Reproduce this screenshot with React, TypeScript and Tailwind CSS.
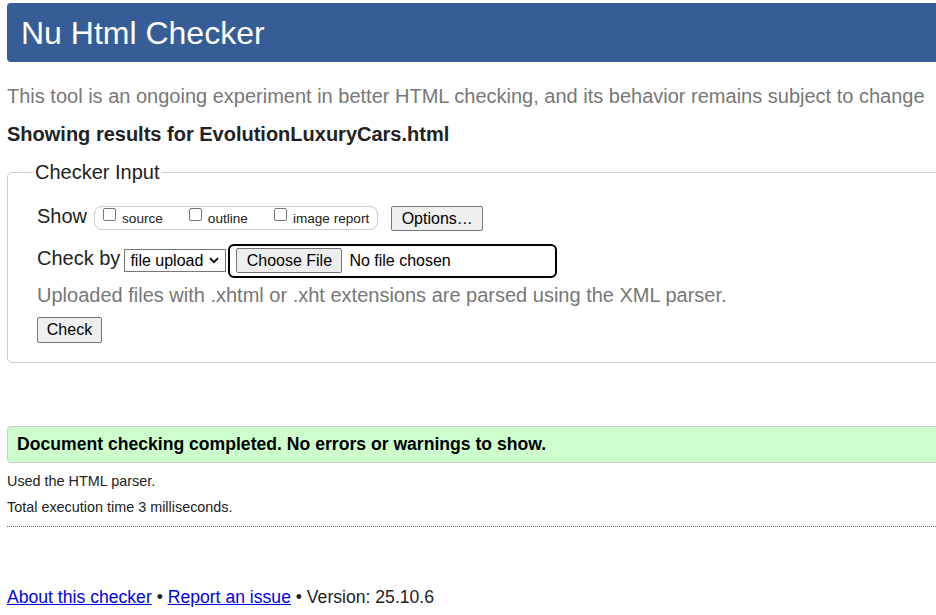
import React from "react";

function Checkbox() {
  return (
    <span className="block w-[13px] h-[13px] shrink-0 bg-white border border-[#767676] rounded-[2px]" />
  );
}

function Opt({ label, first }: { label: string; first?: boolean }) {
  return (
    <label className={`flex items-start ${first ? "" : "ml-[26px]"}`}>
      <Checkbox />
      <span className="ml-[6px] mt-[3px] text-[13.6px] leading-[16px] text-[#222]">{label}</span>
    </label>
  );
}

export default function App() {
  return (
    <div
      className="w-[936px] h-[615px] overflow-hidden bg-white text-[#222]"
      style={{ fontFamily: '"Liberation Sans", Arial, sans-serif' }}
    >
      <div className="w-[1010px] pl-[7px] pt-[3px]">
        <h1 className="h-[59px] bg-[#365d95] rounded-[4px] px-[14px] flex items-center text-white text-[32px] leading-none font-normal">
          Nu Html Checker
        </h1>

        <p className="mt-[23px] text-[20px] leading-[23px] text-[#777]">
          This tool is an ongoing experiment in better HTML checking, and its behavior remains subject to change
        </p>

        <p className="mt-[15px] text-[20px] leading-[23px] font-bold text-[#222]">
          Showing results for EvolutionLuxuryCars.html
        </p>

        <fieldset className="mt-[15px] border border-[#cccccc] rounded-[5px] pl-[29px] pr-[29px] pt-[21px] pb-[19px]">
          <legend className="-ml-[4px] px-[2px] text-[20px] leading-[23px] text-[#222]">Checker Input</legend>

          <div className="flex items-start">
            <span className="text-[20px] leading-[23px]">Show</span>
            <div className="ml-[7px] mt-[1px] h-[24px] flex items-start border border-[#cccccc] rounded-[8px] pl-[8px] pr-[8px] pt-[1px]">
              <Opt label="source" first />
              <Opt label="outline" />
              <Opt label="image report" />
            </div>
            <button className="ml-[13px] mt-[1px] h-[25px] w-[92px] flex items-center justify-center bg-[#efefef] border border-[#767676] rounded-[2px] text-[16px] leading-[18px] text-black">
              Options…
            </button>
          </div>

          <div className="mt-[13px] flex items-start">
            <span className="mt-[3px] text-[20px] leading-[23px]">Check by</span>
            <div className="ml-[4px] mt-[5px] h-[23px] w-[102px] flex items-center justify-between border border-[#767676] pl-[5px] pr-[6px] bg-white">
              <span className="text-[16px] leading-[18px] text-black">file upload</span>
              <svg width="10" height="7" viewBox="0 0 10 7" className="shrink-0">
                <path d="M1 1.2 L5 5.2 L9 1.2" fill="none" stroke="#000" strokeWidth="1.8" />
              </svg>
            </div>
            <div className="ml-[2px] h-[34px] w-[329px] flex items-start border-2 border-black rounded-[6px] pl-[6px] pt-[2px]">
              <span className="h-[25px] w-[106px] flex items-center justify-center bg-[#efefef] border border-[#767676] rounded-[2px] text-[16px] leading-[18px] text-black">
                Choose File
              </span>
              <span className="ml-[7px] mt-[4px] text-[16px] leading-[18px] text-black">No file chosen</span>
            </div>
          </div>

          <p className="mt-[6px] text-[20px] leading-[23px] text-[#777]">
            Uploaded files with .xhtml or .xht extensions are parsed using the XML parser.
          </p>

          <button className="mt-[10px] h-[26px] w-[65px] flex items-center justify-center bg-[#efefef] border border-[#767676] rounded-[2px] text-[16px] leading-[18px] text-black">
            Check
          </button>
        </fieldset>

        <div className="mt-[63px] h-[37px] bg-[#ccffcc] border border-[#cccccc] rounded-[4px] pl-[9px] pt-[7px]">
          <p className="text-[17.6px] leading-[20px] font-bold text-black">
            Document checking completed. No errors or warnings to show.
          </p>
        </div>

        <p className="mt-[10px] text-[14.4px] leading-[17px] text-[#222]">Used the HTML parser.</p>
        <p className="mt-[9px] text-[14.4px] leading-[17px] text-[#222]">Total execution time 3 milliseconds.</p>

        <div className="mt-[10px] border-t border-dotted border-[#666]" />

        <p className="mt-[60px] text-[17.6px] leading-[20px] text-[#222]">
          <a href="#" className="text-[#0000ee] underline">About this checker</a>
          {" • "}
          <a href="#" className="text-[#0000ee] underline">Report an issue</a>
          {" • Version: 25.10.6"}
        </p>
      </div>
    </div>
  );
}
